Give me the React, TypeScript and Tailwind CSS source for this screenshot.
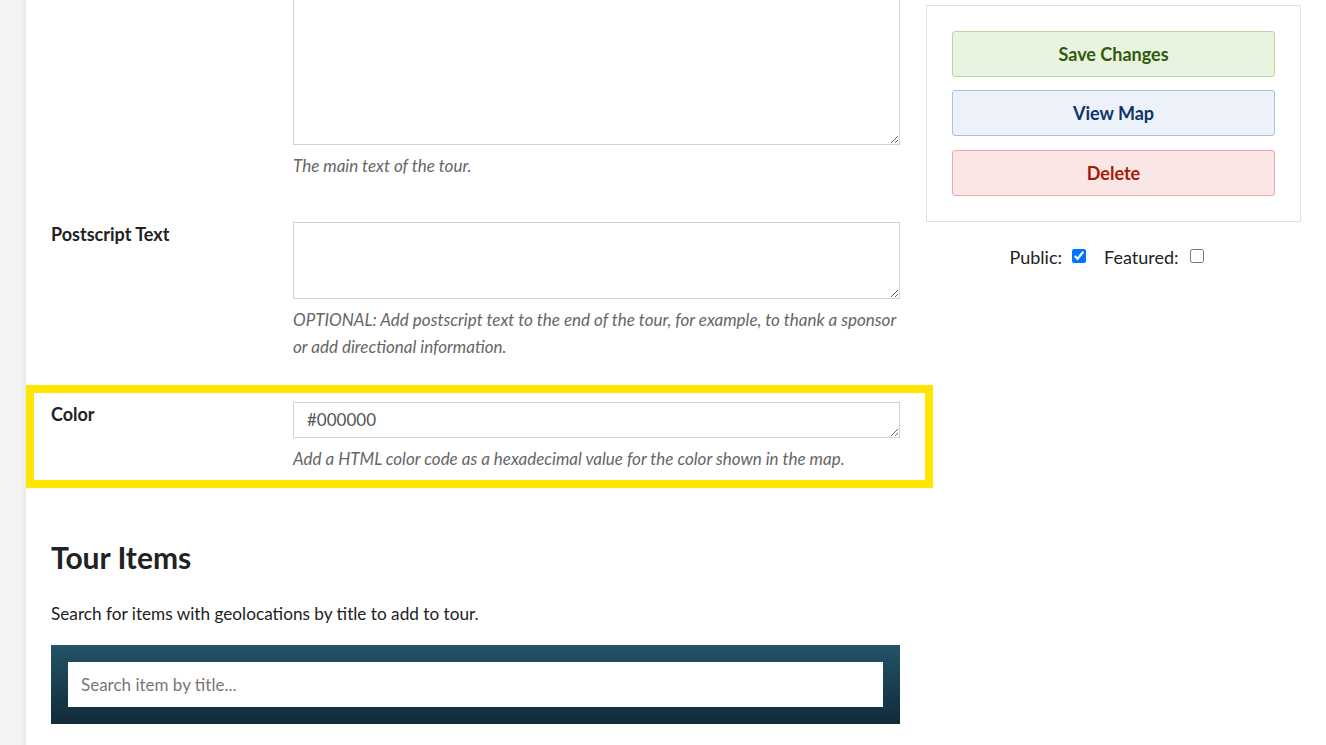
import React from "react";

const font = "font-['Lato','Noto_Sans',sans-serif]";

type FieldProps = {
  label?: string;
  help: React.ReactNode;
  children: React.ReactNode;
};

const Field = ({ label, help, children }: FieldProps) => (
  <div className="flex">
    <div className="w-[242px] shrink-0 text-[18px] font-bold leading-[24px] text-[#222]">
      {label}
    </div>
    <div className="flex-1">
      {children}
      <p className="mt-[7px] text-[17px] italic leading-[27px] text-[#666]">{help}</p>
    </div>
  </div>
);

const boxClass =
  "block w-full border border-[#d4d4c2] bg-white px-[13px] text-[17px] text-[#555] outline-none";

export default function App() {
  return (
    <div className={`${font} flex min-h-[745px] bg-white`}>
      <aside className="w-[26px] shrink-0 bg-[#f4f4f4] shadow-[inset_-5px_0_6px_-4px_rgba(0,0,0,0.07)]" />

      <main className="w-[874px] shrink-0 pl-[25px]">
        <Field help="The main text of the tour.">
          <textarea className={`${boxClass} h-[145px] border-t-0`} />
        </Field>

        <div className="mt-[43px]">
          <Field
            label="Postscript Text"
            help="OPTIONAL: Add postscript text to the end of the tour, for example, to thank a sponsor or add directional information."
          >
            <textarea className={`${boxClass} h-[77px]`} />
          </Field>
        </div>

        <div className="-ml-[25px] -mr-[33px] mt-[25px] border-[8px] border-[#ffe500] pb-[8px] pl-[17px] pr-[25px] pt-[9px]">
          <Field
            label="Color"
            help="Add a HTML color code as a hexadecimal value for the color shown in the map."
          >
            <textarea
              className={`${boxClass} h-[36px] py-[5px] leading-[24px]`}
              defaultValue="#000000"
            />
          </Field>
        </div>

        <h2 className="mt-[49px] text-[30px] font-bold leading-[40px] text-[#222]">Tour Items</h2>
        <p className="mt-[25px] text-[17.2px] leading-[24px] text-[#222]">
          Search for items with geolocations by title to add to tour.
        </p>
        <div className="mt-[19px] bg-gradient-to-b from-[#245469] to-[#112b3a] p-[17px]">
          <input
            className="block h-[45px] w-full bg-white px-[13px] text-[17px] text-[#333] outline-none placeholder:text-[#777]"
            placeholder="Search item by title..."
          />
        </div>
      </main>

      <aside className="ml-[26px] w-[375px] shrink-0 pt-[5px]">
        <div className="flex flex-col border border-[#e2e2da] p-[25px]">
          <button className="h-[46px] rounded-[3px] border border-[#b9d6a0] bg-[#e8f3e0] text-[18px] font-bold text-[#2f5b0c]">
            Save Changes
          </button>
          <button className="mt-[13px] h-[46px] rounded-[3px] border border-[#aac2e2] bg-[#ecf1fa] text-[18px] font-bold text-[#0e3468]">
            View Map
          </button>
          <button className="mt-[14px] h-[46px] rounded-[3px] border border-[#eba9a9] bg-[#fbe6e6] text-[18px] font-bold text-[#a81806]">
            Delete
          </button>
        </div>
        <div className="mt-[23px] flex items-center justify-center pr-[14px] text-[18px] leading-[24px] text-[#222]">
          <label className="flex items-center">
            Public:
            <input type="checkbox" defaultChecked className="ml-[10px] -mt-[3px] h-[14px] w-[14px]" />
          </label>
          <label className="ml-[18px] flex items-center">
            Featured:
            <input type="checkbox" className="ml-[11px] -mt-[3px] h-[14px] w-[14px]" />
          </label>
        </div>
      </aside>
    </div>
  );
}
